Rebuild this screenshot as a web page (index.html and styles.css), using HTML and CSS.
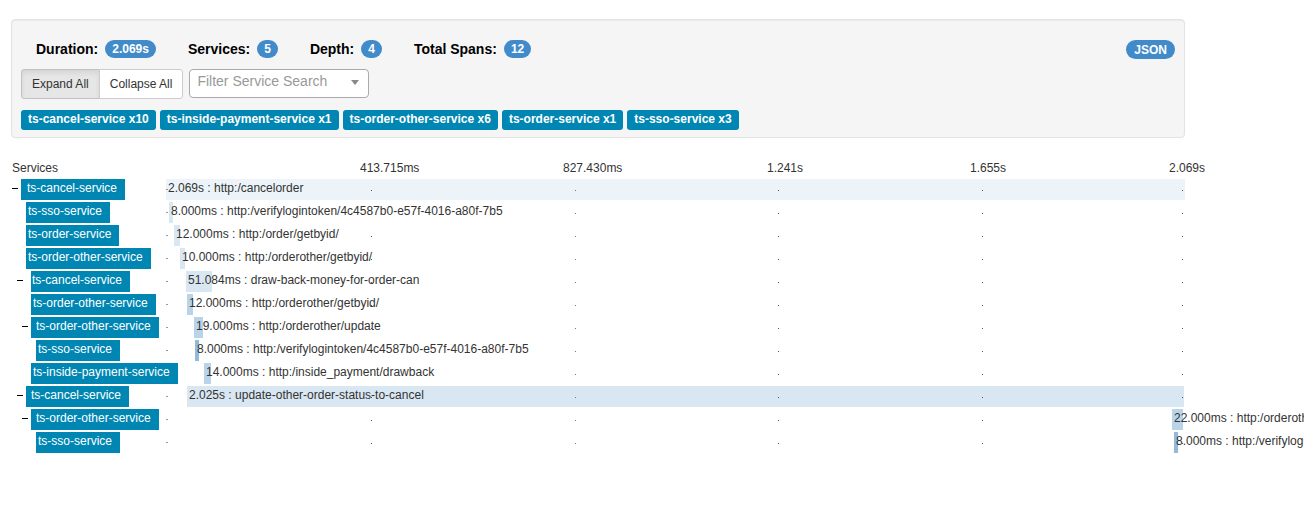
FILE: index.html
```html
<!DOCTYPE html>
<html>
<head>
<meta charset="utf-8">
<title>Trace</title>
<link rel="stylesheet" href="styles.css">
</head>
<body>
<div class="summary">
  <div class="stats">
    <div class="stat"><strong>Duration:</strong><span class="badge">2.069s</span></div>
    <div class="stat"><strong>Services:</strong><span class="badge">5</span></div>
    <div class="stat"><strong>Depth:</strong><span class="badge">4</span></div>
    <div class="stat"><strong>Total Spans:</strong><span class="badge">12</span></div>
    <span class="badge json">JSON</span>
  </div>
  <div class="controls">
    <div class="btn-group">
      <button class="btn active">Expand All</button>
      <button class="btn">Collapse All</button>
    </div>
    <div class="select">
      <span class="placeholder">Filter Service Search</span>
      <span class="arrow"></span>
    </div>
  </div>
  <div class="tags">
    <span class="tag">ts-cancel-service x10</span>
    <span class="tag">ts-inside-payment-service x1</span>
    <span class="tag">ts-order-other-service x6</span>
    <span class="tag">ts-order-service x1</span>
    <span class="tag">ts-sso-service x3</span>
  </div>
</div>

<div class="trace">
  <div class="axis">
    <div class="axis-title">Services</div>
    <div class="ticks">
      <span class="tick t1">413.715ms</span>
      <span class="tick t2">827.430ms</span>
      <span class="tick t3">1.241s</span>
      <span class="tick t4">1.655s</span>
      <span class="tick t5">2.069s</span>
    </div>
  </div>

  <div class="row">
    <div class="lbl"><span class="tog ml12"></span><span class="svc pl6">ts-cancel-service</span></div>
    <div class="track"><div class="bar s0" style="left:0;width:1019px">2.069s : http:/cancelorder</div></div>
  </div>
  <div class="row">
    <div class="lbl"><span class="svc ml26 pl2">ts-sso-service</span></div>
    <div class="track"><div class="bar s1" style="left:3px;width:4px">8.000ms : http:/verifylogintoken/4c4587b0-e57f-4016-a80f-7b5</div></div>
  </div>
  <div class="row">
    <div class="lbl"><span class="svc ml26 pl2">ts-order-service</span></div>
    <div class="track"><div class="bar s1" style="left:8px;width:6px">12.000ms : http:/order/getbyid/</div></div>
  </div>
  <div class="row">
    <div class="lbl"><span class="svc ml26 pl2">ts-order-other-service</span></div>
    <div class="track"><div class="bar s1" style="left:14px;width:5px">10.000ms : http:/orderother/getbyid/</div></div>
  </div>
  <div class="row">
    <div class="lbl"><span class="tog ml17 wide"></span><span class="svc pl1">ts-cancel-service</span></div>
    <div class="track"><div class="bar s1" style="left:20px;width:26px">51.084ms : draw-back-money-for-order-can</div></div>
  </div>
  <div class="row">
    <div class="lbl"><span class="svc ml31 pl2">ts-order-other-service</span></div>
    <div class="track"><div class="bar s2" style="left:21px;width:6px">12.000ms : http:/orderother/getbyid/</div></div>
  </div>
  <div class="row">
    <div class="lbl"><span class="tog ml22"></span><span class="svc pl5">ts-order-other-service</span></div>
    <div class="track"><div class="bar s2" style="left:28px;width:9px">19.000ms : http:/orderother/update</div></div>
  </div>
  <div class="row">
    <div class="lbl"><span class="svc ml36 pl2">ts-sso-service</span></div>
    <div class="track"><div class="bar s3" style="left:29px;width:4px">8.000ms : http:/verifylogintoken/4c4587b0-e57f-4016-a80f-7b5</div></div>
  </div>
  <div class="row">
    <div class="lbl"><span class="svc ml31 pl2">ts-inside-payment-service</span></div>
    <div class="track"><div class="bar s2" style="left:38px;width:7px">14.000ms : http:/inside_payment/drawback</div></div>
  </div>
  <div class="row">
    <div class="lbl"><span class="tog ml17"></span><span class="svc pl5">ts-cancel-service</span></div>
    <div class="track"><div class="bar s1" style="left:21px;width:997px">2.025s : update-other-order-status-to-cancel</div></div>
  </div>
  <div class="row">
    <div class="lbl"><span class="tog ml22"></span><span class="svc pl5">ts-order-other-service</span></div>
    <div class="track"><div class="bar s2" style="left:1006px;width:11px">22.000ms : http:/orderother/getbyid/</div></div>
  </div>
  <div class="row">
    <div class="lbl"><span class="svc ml36 pl2">ts-sso-service</span></div>
    <div class="track"><div class="bar s3" style="left:1008px;width:4px">8.000ms : http:/verifylogintoken/4c4587b0-e57f-4016-a80f-7b5</div></div>
  </div>
</div>
</body>
</html>
```

FILE: styles.css
```css
html, body {
  margin: 0;
  padding: 0;
  background: #fff;
  overflow: hidden;
}

body {
  font-family: "Liberation Sans", Arial, sans-serif;
  font-size: 12px;
  color: #333;
  width: 1304px;
}

/* ---------- summary panel ---------- */
.summary {
  margin: 19px 0 0 11px;
  width: 1174px;
  box-sizing: border-box;
  background: #f5f5f5;
  border: 1px solid #e3e3e3;
  border-radius: 4px;
  padding: 19px 9px 7px 9px;
  box-shadow: inset 0 1px 1px rgba(0, 0, 0, 0.05);
}

.stats {
  display: flex;
  align-items: center;
  height: 20px;
  padding-left: 15px;
}

.stat {
  display: flex;
  align-items: center;
  margin-right: 32px;
}

.stat strong {
  font-size: 14px;
  font-weight: bold;
  color: #000;
  line-height: 20px;
}

.badge {
  display: inline-block;
  margin-left: 7px;
  padding: 3px 7px;
  font-size: 12px;
  font-weight: bold;
  line-height: 12px;
  color: #fff;
  background: #428bca;
  border-radius: 10px;
}

.badge.json {
  margin-left: auto;
  padding: 4px 8px 3px;
  line-height: 12px;
}

.controls {
  display: flex;
  align-items: flex-start;
  margin-top: 10px;
}

.btn-group {
  display: flex;
}

.btn {
  font-family: "Liberation Sans", Arial, sans-serif;
  font-size: 12px;
  line-height: 18px;
  padding: 5px 10px;
  color: #333;
  background: #fff;
  border: 1px solid #ccc;
  margin: 0;
  cursor: pointer;
}

.btn:first-child {
  border-radius: 3px 0 0 3px;
}

.btn:last-child {
  border-radius: 0 3px 3px 0;
  margin-left: -1px;
}

.btn.active {
  background: #e6e6e6;
  border-color: #c2c2c2;
  box-shadow: inset 0 3px 5px rgba(0, 0, 0, 0.08);
}

.select {
  position: relative;
  margin-left: 6px;
  width: 180px;
  height: 29px;
  box-sizing: border-box;
  background: #fff;
  border: 1px solid #aaa;
  border-radius: 4px;
  padding-left: 7px;
}

.placeholder {
  display: block;
  font-size: 14px;
  line-height: 22px;
  color: #999;
}

.arrow {
  position: absolute;
  right: 9px;
  top: 10px;
  width: 0;
  height: 0;
  border-style: solid;
  border-width: 5px 4px 0 4px;
  border-color: #888 transparent transparent transparent;
}

.tags {
  display: flex;
  gap: 4px;
  margin-top: 11px;
}

.tag {
  display: inline-block;
  padding: 3px 7px 5px;
  font-size: 12px;
  font-weight: bold;
  line-height: 12px;
  color: #fff;
  background: #0086b3;
  border-radius: 3px;
  white-space: nowrap;
}

/* ---------- trace timeline ---------- */
.trace {
  margin-top: 23px;
}

.axis {
  display: flex;
  height: 18px;
  line-height: 14px;
}

.axis-title {
  flex: 0 0 166px;
  box-sizing: border-box;
  padding-left: 12px;
  color: #333;
}

.ticks {
  position: relative;
  flex: 1;
}

.tick {
  position: absolute;
  top: 0;
  white-space: nowrap;
  color: #333;
}

.t1 { left: 194px; }
.t2 { left: 397px; }
.t3 { left: 601px; }
.t4 { left: 804px; }
.t5 { left: 1003px; }

.row {
  display: flex;
  height: 23px;
}

.lbl {
  flex: 0 0 166px;
  min-width: 0;
  display: flex;
  align-items: flex-start;
  height: 21px;
}

.tog {
  flex: none;
  width: 6px;
  height: 1px;
  margin-top: 9px;
  margin-right: 3px;
  background: #000;
}

.tog.wide {
  margin-right: 8px;
}

.svc {
  position: relative;
  z-index: 2;
  flex: none;
  display: inline-block;
  height: 21px;
  line-height: 19px;
  padding-right: 8px;
  color: #fff;
  background: #0086b3;
  white-space: nowrap;
}

.ml12 { margin-left: 12px; }
.ml17 { margin-left: 17px; }
.ml22 { margin-left: 22px; }
.ml26 { margin-left: 26px; }
.ml31 { margin-left: 31px; }
.ml36 { margin-left: 36px; }

.pl1 { padding-left: 1px; }
.pl2 { padding-left: 2px; }
.pl5 { padding-left: 5px; }
.pl6 { padding-left: 6px; }

.track {
  position: relative;
  flex: 0 0 1019px;
  height: 21px;
}

.track::before {
  content: "";
  position: absolute;
  left: 0;
  top: 10px;
  width: 2px;
  height: 1px;
  background: #8a9bb0;
  z-index: 1;
}

.track::after {
  content: "";
  position: absolute;
  left: 205px;
  top: 11px;
  width: 1px;
  height: 1px;
  background: #555;
  box-shadow: 204px 0 #777, 407px 0 #555, 611px 0 #9b3669, 811px 0 #555;
  z-index: 1;
}

.bar {
  position: absolute;
  top: 0;
  height: 21px;
  box-sizing: border-box;
  padding-left: 2px;
  line-height: 19px;
  white-space: nowrap;
  color: #333;
}

.s0 { background: #ecf3f9; }
.s1 { background: #d9e7f2; }
.s2 { background: #b9d4e9; }
.s3 { background: #92bbdb; }
```
